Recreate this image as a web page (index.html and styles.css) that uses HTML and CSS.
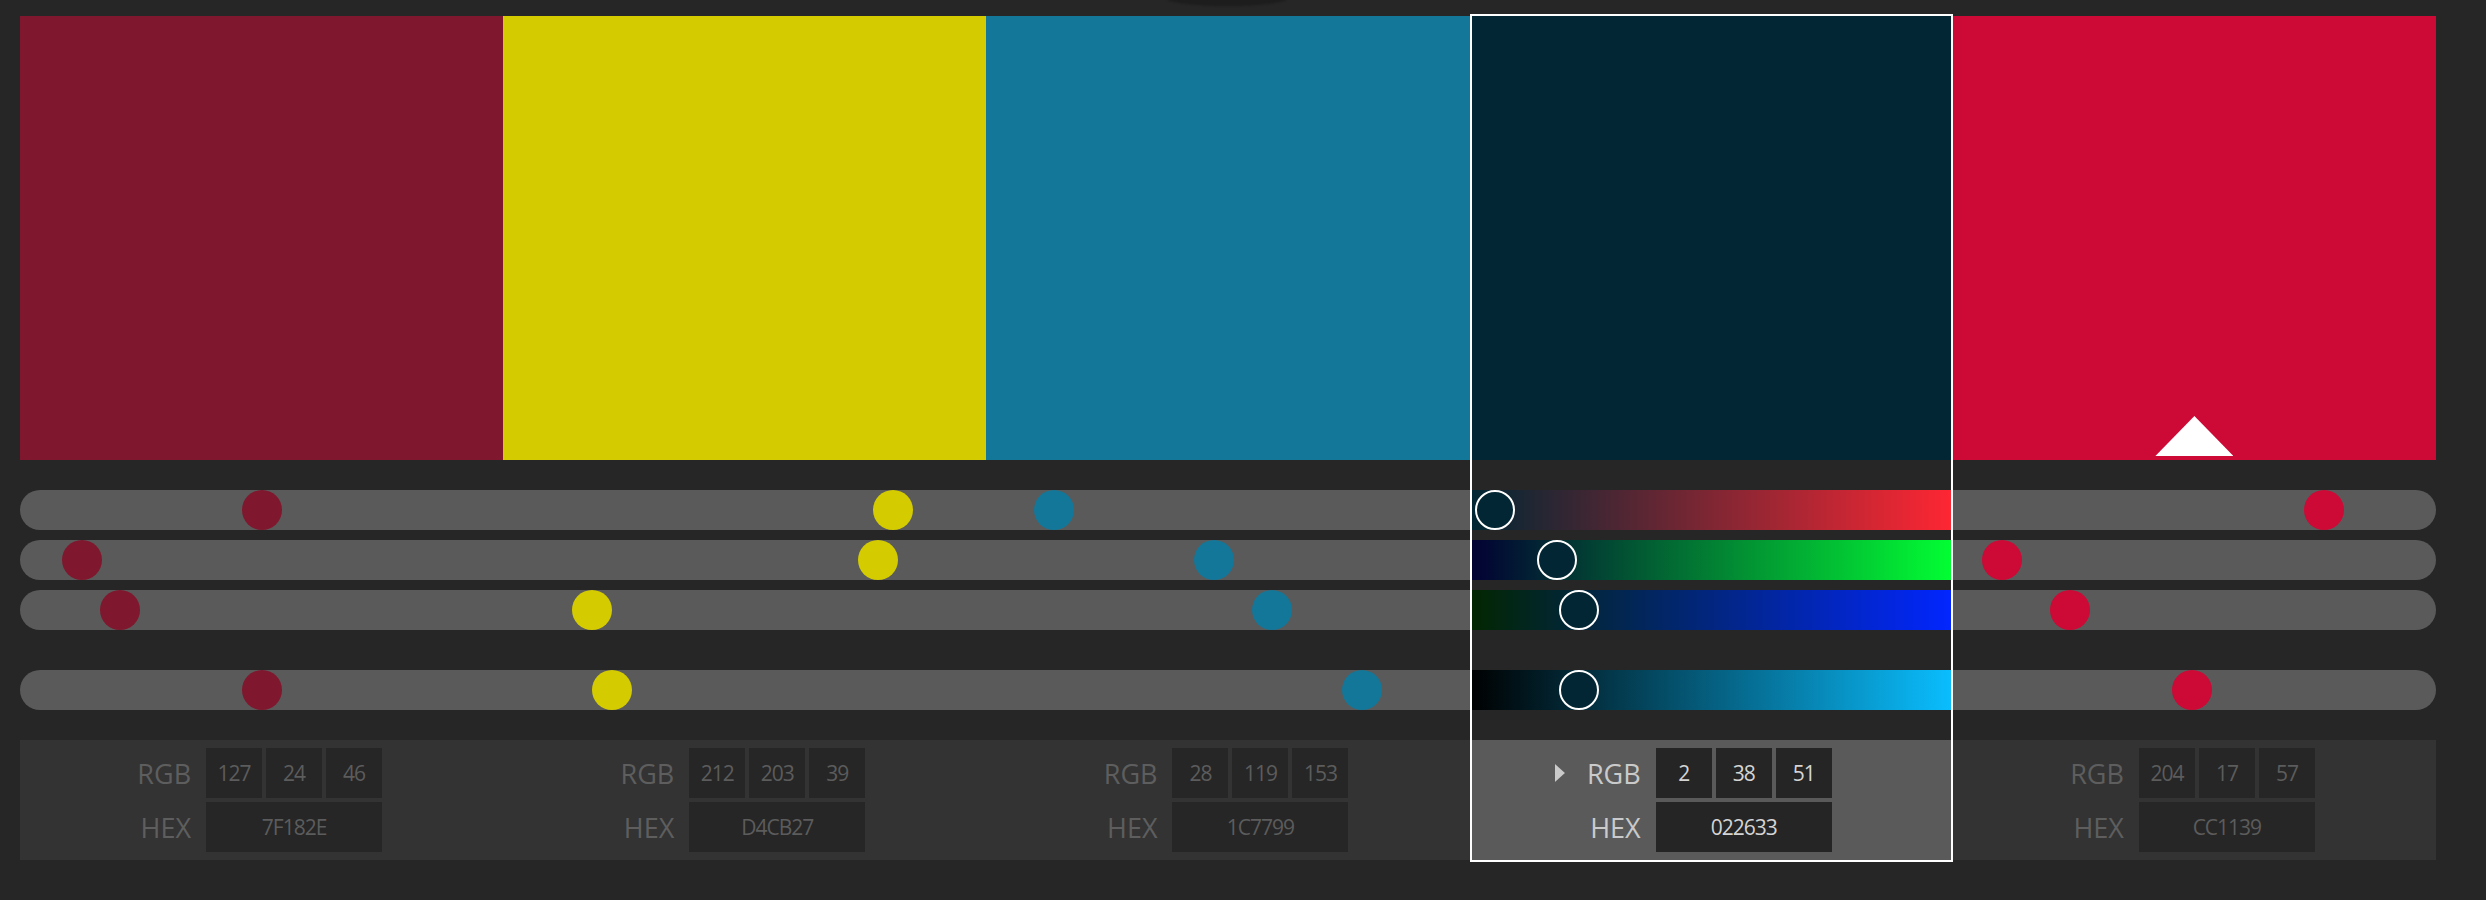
FILE: index.html
```html
<!DOCTYPE html>
<html lang="en">
<head>
<meta charset="utf-8">
<title>Color Theme</title>
<link rel="stylesheet" href="styles.css">
</head>
<body>
<div class="shade"></div>
<main class="app">
  <section class="swatches">
    <div class="swatch c-red"></div>
    <div class="swatch c-yellow"></div>
    <div class="swatch c-teal"></div>
    <div class="swatch c-navy"></div>
    <div class="swatch c-crimson"><span class="marker"></span></div>
  </section>

  <section class="sliders">
    <div class="track">
      <div class="cell"><div class="rail"><span class="dot c-red" style="left:50.05%"></span></div></div>
      <div class="cell"><div class="rail"><span class="dot c-yellow" style="left:83.55%"></span></div></div>
      <div class="cell"><div class="rail"><span class="dot c-teal" style="left:10.65%"></span></div></div>
      <div class="cell sel grad-r"><div class="rail"><span class="dot ring" style="left:0.78%"></span></div></div>
      <div class="cell"><div class="rail"><span class="dot c-crimson" style="left:79.2%"></span></div></div>
    </div>
    <div class="track">
      <div class="cell"><div class="rail"><span class="dot c-red" style="left:9.45%"></span></div></div>
      <div class="cell"><div class="rail"><span class="dot c-yellow" style="left:79.96%"></span></div></div>
      <div class="cell"><div class="rail"><span class="dot c-teal" style="left:46.75%"></span></div></div>
      <div class="cell sel grad-g"><div class="rail"><span class="dot ring" style="left:14.9%"></span></div></div>
      <div class="cell"><div class="rail"><span class="dot c-crimson" style="left:6.6%"></span></div></div>
    </div>
    <div class="track">
      <div class="cell"><div class="rail"><span class="dot c-red" style="left:18.05%"></span></div></div>
      <div class="cell"><div class="rail"><span class="dot c-yellow" style="left:15.48%"></span></div></div>
      <div class="cell"><div class="rail"><span class="dot c-teal" style="left:59.86%"></span></div></div>
      <div class="cell sel grad-b"><div class="rail"><span class="dot ring" style="left:20%"></span></div></div>
      <div class="cell"><div class="rail"><span class="dot c-crimson" style="left:21.9%"></span></div></div>
    </div>
    <div class="track spaced">
      <div class="cell"><div class="rail"><span class="dot c-red" style="left:50.05%"></span></div></div>
      <div class="cell"><div class="rail"><span class="dot c-yellow" style="left:19.95%"></span></div></div>
      <div class="cell"><div class="rail"><span class="dot c-teal" style="left:80.14%"></span></div></div>
      <div class="cell sel grad-v"><div class="rail"><span class="dot ring" style="left:20%"></span></div></div>
      <div class="cell"><div class="rail"><span class="dot c-crimson" style="left:49.46%"></span></div></div>
    </div>
  </section>

  <section class="panel">
    <div class="pcell">
      <div class="info">
        <div class="label">RGB</div>
        <div class="vals"><span class="box">127</span><span class="box">24</span><span class="box">46</span></div>
        <div class="label">HEX</div>
        <div class="box hex">7F182E</div>
      </div>
    </div>
    <div class="pcell">
      <div class="info">
        <div class="label">RGB</div>
        <div class="vals"><span class="box">212</span><span class="box">203</span><span class="box">39</span></div>
        <div class="label">HEX</div>
        <div class="box hex">D4CB27</div>
      </div>
    </div>
    <div class="pcell">
      <div class="info">
        <div class="label">RGB</div>
        <div class="vals"><span class="box">28</span><span class="box">119</span><span class="box">153</span></div>
        <div class="label">HEX</div>
        <div class="box hex">1C7799</div>
      </div>
    </div>
    <div class="pcell sel">
      <div class="info">
        <div class="label"><span class="caret"></span>RGB</div>
        <div class="vals"><span class="box">2</span><span class="box">38</span><span class="box">51</span></div>
        <div class="label">HEX</div>
        <div class="box hex">022633</div>
      </div>
    </div>
    <div class="pcell">
      <div class="info">
        <div class="label">RGB</div>
        <div class="vals"><span class="box">204</span><span class="box">17</span><span class="box">57</span></div>
        <div class="label">HEX</div>
        <div class="box hex">CC1139</div>
      </div>
    </div>
  </section>

  <div class="focus"></div>
</main>
</body>
</html>
```

FILE: styles.css
```css
* {
  box-sizing: border-box;
  margin: 0;
  padding: 0;
}

html,
body {
  background: #262626;
}

body {
  position: relative;
  width: 2486px;
  height: 900px;
  overflow: hidden;
  padding: 16px 50px 0 20px;
  font-family: "Open Sans", "DejaVu Sans", sans-serif;
}

.shade {
  position: absolute;
  left: 1167px;
  top: -9px;
  width: 120px;
  height: 15px;
  border-radius: 50%;
  background: #1d1d1d;
  filter: blur(1px);
}

.app {
  position: relative;
  width: 2416px;
}

/* colours */
.c-red { background: #7f182e; }
.c-yellow { background: #d4cc00; }
.c-teal { background: #137799; }
.c-navy { background: #022633; }
.c-crimson { background: #cd0936; }

/* swatches */
.swatches {
  display: grid;
  grid-template-columns: repeat(5, 1fr);
  height: 444px;
}

.swatch {
  display: flex;
  flex-direction: column;
  justify-content: flex-end;
  align-items: center;
  padding-bottom: 4px;
}

.marker {
  width: 78px;
  height: 40px;
  background: #ffffff;
  clip-path: polygon(50% 0, 100% 100%, 0 100%);
}

/* sliders */
.sliders {
  margin-top: 30px;
  display: flex;
  flex-direction: column;
  gap: 10px;
}

.track {
  display: grid;
  grid-template-columns: repeat(5, 1fr);
  height: 40px;
  background: #5a5a5a;
  border-radius: 20px;
}

.track.spaced {
  margin-top: 30px;
}

.rail {
  position: relative;
  height: 100%;
  margin: 0 20px;
}

.cell.sel .rail {
  margin: 0 22px;
}

.grad-r { background: linear-gradient(to right, #002633, #ff2633); }
.grad-g { background: linear-gradient(to right, #020033, #02ff33); }
.grad-b { background: linear-gradient(to right, #022600, #0226ff); }
.grad-v { background: linear-gradient(to right, #000000, #0abeff); }

.dot {
  position: absolute;
  top: 0;
  width: 40px;
  height: 40px;
  margin-left: -20px;
  border-radius: 50%;
}

.dot.ring {
  background: #022633;
  border: 2px solid #ffffff;
}

/* info panel */
.panel {
  margin-top: 30px;
  display: grid;
  grid-template-columns: repeat(5, 1fr);
  height: 120px;
  background: #333333;
}

.pcell {
  display: flex;
  justify-content: center;
  align-items: center;
}

.pcell.sel {
  background: #5a5a5a;
}

.info {
  display: grid;
  grid-template-columns: 50px 176px;
  grid-template-rows: 50px 50px;
  column-gap: 15px;
  row-gap: 4px;
}

.label {
  display: flex;
  justify-content: flex-end;
  align-items: center;
  white-space: nowrap;
  font-size: 27px;
  line-height: 1;
  color: #5e5e5e;
}

.vals {
  display: grid;
  grid-template-columns: repeat(3, 56px);
  column-gap: 4px;
}

.box {
  display: flex;
  justify-content: center;
  align-items: center;
  background: #262626;
  font-size: 21px;
  letter-spacing: -1px;
  line-height: 1;
  color: #5c5c5c;
}

.pcell.sel .label {
  color: #cacaca;
}

.pcell.sel .box {
  background: #252525;
  color: #d4d4d4;
}

.caret {
  flex: 0 0 10px;
  width: 10px;
  height: 18px;
  margin-right: 22px;
  background: #cacaca;
  clip-path: polygon(0 0, 100% 50%, 0 100%);
}

.focus {
  position: absolute;
  top: -2px;
  bottom: -2px;
  left: 60%;
  width: 20%;
  border: 2px solid #ffffff;
  pointer-events: none;
}
```
